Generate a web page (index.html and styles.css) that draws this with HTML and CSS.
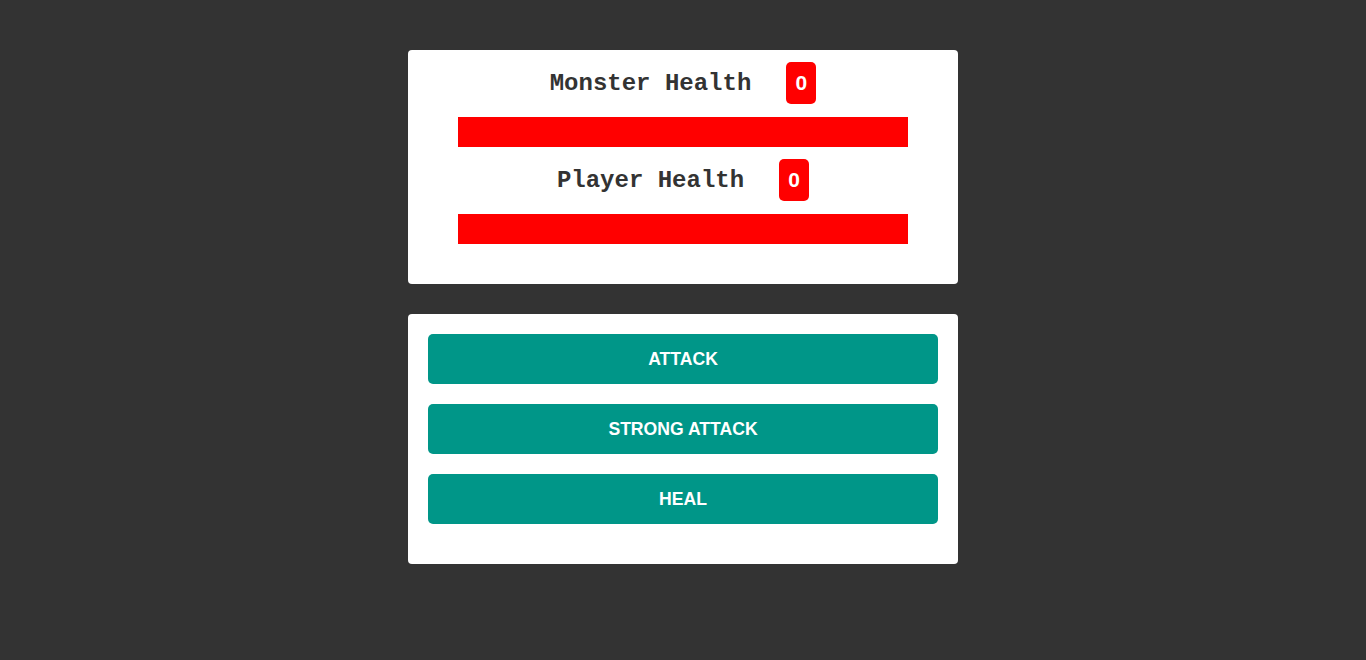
FILE: index.html
```html
<!DOCTYPE html>
<html lang="en">
<head>
<meta charset="utf-8">
<title>Monster Killer</title>
<link rel="stylesheet" href="styles.css">
</head>
<body>
  <main class="page">
    <section class="card health">
      <h2 class="health-title"><span class="label">Monster Health</span><span class="badge">0</span></h2>
      <div class="bar"></div>
      <h2 class="health-title"><span class="label">Player Health</span><span class="badge">0</span></h2>
      <div class="bar"></div>
    </section>
    <section class="card controls">
      <button class="btn">ATTACK</button>
      <button class="btn">STRONG ATTACK</button>
      <button class="btn">HEAL</button>
    </section>
  </main>
</body>
</html>
```
FILE: styles.css
```css
* { box-sizing: border-box; }
html, body {
  margin: 0;
  padding: 0;
  background: #333333;
  height: 100%;
}
.page {
  display: flex;
  flex-direction: column;
  align-items: center;
  gap: 30px;
  padding-top: 50px;
}
.card {
  width: 550px;
  background: #ffffff;
  border-radius: 4px;
}
.health {
  display: flex;
  flex-direction: column;
  align-items: center;
  padding: 12px 50px 40px;
}
.health-title {
  display: flex;
  align-items: center;
  margin: 0;
  height: 42px;
  font-family: "Liberation Mono", "Courier New", monospace;
  font-weight: bold;
  font-size: 24px;
  color: #333333;
}
.label {
  padding-top: 1px;
}
.badge {
  display: inline-block;
  margin-left: 35px;
  width: 30px;
  height: 42px;
  line-height: 42px;
  text-align: center;
  background: #ff0000;
  color: #ffffff;
  border-radius: 5px;
  font-family: "Liberation Sans", Arial, sans-serif;
  font-size: 21px;
}
.bar {
  width: 450px;
  height: 30px;
  background: #ff0000;
  margin: 13px 0 12px;
}
.bar:last-child { margin-bottom: 0; }
.controls {
  display: flex;
  flex-direction: column;
  gap: 20px;
  padding: 20px 20px 40px;
}
.btn {
  height: 50px;
  border: none;
  border-radius: 5px;
  background: #009688;
  color: #ffffff;
  font-family: "Liberation Sans", Arial, sans-serif;
  font-weight: bold;
  font-size: 17.6px;
  cursor: pointer;
}
```
